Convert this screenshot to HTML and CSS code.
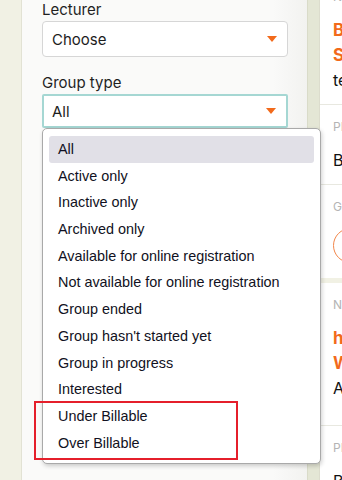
FILE: index.html
```html
<!DOCTYPE html>
<html lang="en">
<head>
<meta charset="UTF-8">
<meta name="viewport" content="width=device-width, initial-scale=1.0">
<link rel="stylesheet" href="styles.css">
<title>Groups filter</title>
</head>
<body>

<main class="page">

<div class="sideStrip"></div>

<section class="filterPanel">

<div class="field">
<label class="fieldLabel">Lecturer</label>
<div class="selectBox">
<span>Choose</span>
<i class="caret"></i>
</div>
</div>

<div class="field">
<label class="fieldLabel">Group type</label>
<div class="selectBox focused">
<span>All</span>
<i class="caret"></i>
</div>
</div>

<ul class="dropList">
<li class="opt active">All</li>
<li class="opt">Active only</li>
<li class="opt">Inactive only</li>
<li class="opt">Archived only</li>
<li class="opt">Available for online registration</li>
<li class="opt">Not available for online registration</li>
<li class="opt">Group ended</li>
<li class="opt">Group hasn't started yet</li>
<li class="opt">Group in progress</li>
<li class="opt">Interested</li>
<li class="opt">Under Billable</li>
<li class="opt">Over Billable</li>
</ul>

<div class="markBox"></div>

</section>

<div class="gutter"></div>

<aside class="cards">

<div class="card">
<div class="row">
<p class="tag">NAME</p>
<p class="link">Basic</p>
<p class="link">Spring</p>
<p class="plain">term</p>
</div>
<div class="row">
<p class="tag">PLACE</p>
<p class="plain">Berlin</p>
</div>
<div class="row last">
<p class="tag">GROUP</p>
<span class="ring"></span>
</div>
</div>

<div class="card">
<div class="row tall">
<p class="tag">NAME</p>
<p class="link">html</p>
<p class="link">Web</p>
<p class="plain">Autumn</p>
</div>
<div class="row">
<p class="tag">PLACE</p>
<p class="plain">Berlin</p>
</div>
</div>

</aside>

</main>

</body>
</html>
```

FILE: styles.css
```css
*,*:before,*:after{
margin: 0;
padding: 0;
box-sizing: border-box;
}

html,body{
height: 100%;
overflow: hidden;
}

body{
background: #f1f1e4;
font-family: Inter, "Liberation Sans", sans-serif;
color: #1d1d1d;
}

ul{
list-style-type: none;
}

.page{
display: flex;
height: 480px;
}

.sideStrip{
width: 22px;
flex: none;
border-right: 1px solid #e2e2d4;
}

.filterPanel{
position: relative;
width: 285px;
flex: none;
padding: 0 19px 0 20px;
background: linear-gradient(to right, #fafaf9 88%, #f2f2f0);
}

.field{
display: flex;
flex-direction: column;
}

.fieldLabel{
height: 20px;
font-size: 15px;
line-height: 20px;
color: #1f1f1f;
}

.selectBox{
display: flex;
align-items: center;
justify-content: space-between;
height: 36px;
margin-top: 1px;
padding: 0 10px 0 9px;
background: #fff;
border: 1px solid #d6d6d6;
border-radius: 4px;
font-size: 15px;
}

.field + .field{
margin-top: 16px;
}

.selectBox.focused{
height: 34px;
border: 2px solid #a5d7d3;
border-radius: 2px;
padding-left: 8px;
}

.caret{
width: 0;
height: 0;
border-left: 5px solid transparent;
border-right: 5px solid transparent;
border-top: 6px solid #f26a1b;
}

.dropList{
position: absolute;
left: 20px;
top: 128px;
width: 279px;
padding: 7px 6px;
background: #fff;
border: 1px solid #a9a9a9;
border-radius: 5px;
box-shadow: 1px 2px 4px #00000030;
font-family: "Liberation Sans", Arial, sans-serif;
font-size: 14.4px;
color: #111122;
}

.opt{
height: 26.7px;
line-height: 26.7px;
padding-left: 9px;
white-space: nowrap;
border-radius: 3px;
}

.opt.active{
background: #e1e0e7;
}

.markBox{
position: absolute;
left: 12px;
top: 401px;
width: 204px;
height: 59px;
border: 2px solid #e51f2b;
}

.gutter{
width: 12px;
flex: none;
background: #e4e6d5;
border-left: 1px solid #d9dbc9;
}

.cards{
flex: 1;
overflow: hidden;
display: flex;
flex-direction: column;
gap: 5px;
margin-top: -25.5px;
}

.card{
background: #fff;
border-left: 1px solid #dcdccd;
}

.row{
padding: 14px 12px 11px 13px;
border-bottom: 1px solid #e8e8e0;
white-space: nowrap;
}

.row.last{
border-bottom: none;
padding-bottom: 15px;
}

.row.tall{
padding-bottom: 24px;
}

.tag{
font-size: 12px;
line-height: 16px;
color: #b4b4b4;
margin-bottom: 13px;
}

.link{
font-size: 17px;
font-weight: 700;
line-height: 25px;
color: #f26a1b;
}

.plain{
font-size: 16px;
line-height: 25px;
color: #111;
}

.ring{
display: block;
width: 35px;
height: 35px;
border: 1px solid #f2864a;
border-radius: 50%;
}
```
